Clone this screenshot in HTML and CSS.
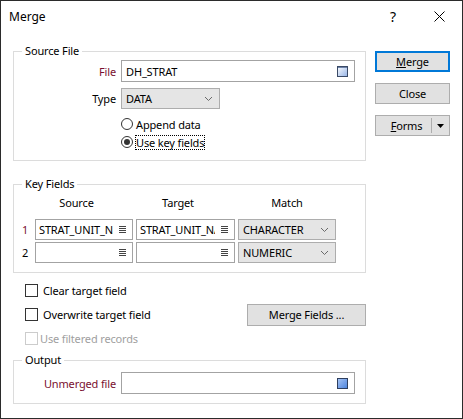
FILE: index.html
```html
<!DOCTYPE html>
<html lang="en">

<head>
    <meta charset="UTF-8">
    <title>Merge</title>
    <link rel="stylesheet" href="styles.css">
</head>

<body>
    <div class="window">
        <div class="titlebar">
            <span class="title">Merge</span>
            <div class="caption-buttons">
                <span class="cap-btn help">?</span>
                <span class="cap-btn">
                    <svg width="11" height="11" viewBox="0 0 11 11"><path d="M0.5 0.5 L10.5 10.5 M10.5 0.5 L0.5 10.5" stroke="#000" stroke-width="1" fill="none"/></svg>
                </span>
            </div>
        </div>

        <div class="dialog-body">
            <div class="main-col">
                <fieldset class="group source-group">
                    <legend>Source File</legend>
                    <div class="field-row">
                        <label class="field-label required">File</label>
                        <div class="textbox wide">
                            <span class="value">DH_STRAT</span>
                            <svg class="browse-icon" width="11" height="11" viewBox="0 0 11 11">
                                <defs>
                                    <linearGradient id="fileGrad" x1="0" y1="0" x2="1" y2="1">
                                        <stop offset="0" stop-color="#ffffff"/>
                                        <stop offset="1" stop-color="#93b2e6"/>
                                    </linearGradient>
                                </defs>
                                <rect x="0.5" y="0.5" width="10" height="10" fill="url(#fileGrad)" stroke="#3a4a66"/>
                                <line x1="1" y1="1.5" x2="10" y2="1.5" stroke="#6d82a8"/>
                            </svg>
                        </div>
                    </div>
                    <div class="field-row type-row">
                        <label class="field-label">Type</label>
                        <div class="combo type-combo">
                            <span class="value">DATA</span>
                            <svg class="chevron" width="7" height="4" viewBox="0 0 7 4"><path d="M0 0 L3.5 3.5 L7 0" stroke="#6a6a6a" fill="none"/></svg>
                        </div>
                    </div>
                    <div class="radio-list">
                        <div class="radio-row">
                            <span class="radio"></span>
                            <span class="radio-text">Append data</span>
                        </div>
                        <div class="radio-row">
                            <span class="radio checked"></span>
                            <span class="radio-text focused">Use key fields</span>
                        </div>
                    </div>
                </fieldset>

                <fieldset class="group key-group">
                    <legend>Key Fields</legend>
                    <div class="key-head">
                        <span class="num"></span>
                        <span class="col-src head-field">Source</span>
                        <span class="col-tgt head-field">Target</span>
                        <span class="col-match">Match</span>
                    </div>
                    <div class="key-row">
                        <span class="num required">1</span>
                        <div class="textbox col-src">
                            <span class="value clip">STRAT_UNIT_NAME</span>
                            <span class="list-btn"><svg width="7" height="7" viewBox="0 0 7 7"><path d="M0 0.5 H7 M0 2.5 H7 M0 4.5 H7 M0 6.5 H7" stroke="#444"/></svg></span>
                        </div>
                        <div class="textbox col-tgt">
                            <span class="value clip">STRAT_UNIT_NAME</span>
                            <span class="list-btn"><svg width="7" height="7" viewBox="0 0 7 7"><path d="M0 0.5 H7 M0 2.5 H7 M0 4.5 H7 M0 6.5 H7" stroke="#444"/></svg></span>
                        </div>
                        <div class="combo col-match">
                            <span class="value">CHARACTER</span>
                            <svg class="chevron" width="7" height="4" viewBox="0 0 7 4"><path d="M0 0 L3.5 3.5 L7 0" stroke="#6a6a6a" fill="none"/></svg>
                        </div>
                    </div>
                    <div class="key-row">
                        <span class="num">2</span>
                        <div class="textbox col-src">
                            <span class="value clip"></span>
                            <span class="list-btn"><svg width="7" height="7" viewBox="0 0 7 7"><path d="M0 0.5 H7 M0 2.5 H7 M0 4.5 H7 M0 6.5 H7" stroke="#444"/></svg></span>
                        </div>
                        <div class="textbox col-tgt">
                            <span class="value clip"></span>
                            <span class="list-btn"><svg width="7" height="7" viewBox="0 0 7 7"><path d="M0 0.5 H7 M0 2.5 H7 M0 4.5 H7 M0 6.5 H7" stroke="#444"/></svg></span>
                        </div>
                        <div class="combo col-match">
                            <span class="value">NUMERIC</span>
                            <svg class="chevron" width="7" height="4" viewBox="0 0 7 4"><path d="M0 0 L3.5 3.5 L7 0" stroke="#6a6a6a" fill="none"/></svg>
                        </div>
                    </div>
                </fieldset>

                <div class="options">
                    <div class="check-row">
                        <span class="checkbox"></span>
                        <span class="check-text">Clear target field</span>
                    </div>
                    <div class="check-row">
                        <span class="checkbox"></span>
                        <span class="check-text">Overwrite target field</span>
                        <button class="btn merge-fields-btn">Merge Fields ...</button>
                    </div>
                    <div class="check-row disabled">
                        <span class="checkbox"></span>
                        <span class="check-text">Use filtered records</span>
                    </div>
                </div>

                <fieldset class="group output-group">
                    <legend>Output</legend>
                    <div class="field-row">
                        <label class="field-label required">Unmerged file</label>
                        <div class="textbox wide">
                            <span class="value"></span>
                            <svg class="browse-icon" width="11" height="11" viewBox="0 0 11 11">
                                <defs>
                                    <linearGradient id="outGrad" x1="0" y1="0" x2="1" y2="1">
                                        <stop offset="0" stop-color="#a9c6f5"/>
                                        <stop offset="1" stop-color="#4a82dc"/>
                                    </linearGradient>
                                </defs>
                                <rect x="0.5" y="0.5" width="10" height="10" fill="url(#outGrad)" stroke="#2e3f5e"/>
                            </svg>
                        </div>
                    </div>
                </fieldset>
            </div>

            <div class="side-col">
                <button class="btn default"><u>M</u>erge</button>
                <button class="btn">Close</button>
                <div class="btn split-btn">
                    <span class="split-main"><u>F</u>orms</span>
                    <span class="split-arrow"><svg width="7" height="4" viewBox="0 0 7 4"><path d="M0 0 H7 L3.5 4 Z" fill="#000"/></svg></span>
                </div>
            </div>
        </div>
    </div>
</body>

</html>
```

FILE: styles.css
```css
* {
    margin: 0;
    padding: 0;
    box-sizing: border-box;
}

body {
    font-family: "Noto Sans", "DejaVu Sans", sans-serif;
    font-size: 11px;
    letter-spacing: -0.15px;
    color: #000;
    background: #fff;
}

.window {
    width: 463px;
    height: 419px;
    border: 1px solid #2b2b2b;
    background: #fff;
    display: flex;
    flex-direction: column;
}

/* title bar */
.titlebar {
    height: 31px;
    display: flex;
    align-items: center;
    padding-left: 8px;
}

.title {
    flex: 1;
    font-size: 12px;
    letter-spacing: 0;
}

.caption-buttons {
    display: flex;
    height: 100%;
}

.cap-btn {
    width: 46px;
    display: flex;
    align-items: center;
    justify-content: center;
}

.cap-btn.help {
    font-size: 14px;
}

/* body */
.dialog-body {
    display: flex;
    padding-left: 12px;
}

.main-col {
    width: 353px;
    margin-top: 11px;
}

.side-col {
    margin-left: 9px;
    margin-top: 19px;
    display: flex;
    flex-direction: column;
    gap: 11px;
}

/* group boxes */
.group {
    border: 1px solid #dcdcdc;
    padding: 0 10px 9px 0;
}

.group legend {
    margin-left: 8px;
    padding: 0 3px;
    line-height: 16px;
}

.source-group {
    padding-top: 1px;
}

.key-group {
    margin-top: 15px;
    padding-top: 2px;
}

.output-group {
    margin-top: 2px;
    padding-top: 4px;
}

.field-row {
    display: flex;
    align-items: center;
}

.field-label {
    width: 102px;
    margin-right: 5px;
    text-align: right;
}

.required {
    color: #7a1030;
}

.type-row {
    margin-top: 6px;
}

/* inputs */
.textbox {
    height: 21px;
    border: 1px solid #a3a3a3;
    background: #fff;
    display: flex;
    align-items: center;
    padding-left: 4px;
}

.textbox.wide {
    width: 234px;
    height: 22px;
    padding-right: 6px;
}

.textbox .value {
    flex: 1;
    white-space: nowrap;
}

.browse-icon {
    display: block;
}

.combo {
    height: 21px;
    border: 1px solid #adadad;
    background: #e5e5e5;
    display: flex;
    align-items: center;
    padding: 0 7px 0 4px;
}

.combo .value {
    flex: 1;
}

.chevron {
    display: block;
}

.type-combo {
    width: 99px;
}

/* radios */
.radio-list {
    margin-top: 6px;
    margin-left: 107px;
}

.radio-row {
    height: 18px;
    display: flex;
    align-items: center;
}

.radio {
    width: 12px;
    height: 12px;
    border: 1px solid #333;
    border-radius: 50%;
    background: #fff;
    display: flex;
    align-items: center;
    justify-content: center;
    margin-right: 3px;
}

.radio.checked::after {
    content: "";
    width: 6px;
    height: 6px;
    border-radius: 50%;
    background: #333;
}

.radio-text.focused {
    outline: 1px dotted #000;
    line-height: 13px;
}

/* key fields */
.key-head,
.key-row {
    display: flex;
    align-items: center;
}

.key-head {
    height: 16px;
}

.key-row {
    margin-top: 2px;
    height: 21px;
}

.key-head + .key-row {
    margin-top: 9px;
}

.num {
    width: 21px;
    padding-left: 8px;
}

.col-src {
    width: 98px;
}

.col-tgt {
    width: 99px;
    margin-left: 3px;
}

.col-match {
    width: 98px;
    margin-left: 3px;
}

.key-head span {
    text-align: center;
}

.head-field {
    padding-right: 15px;
}

.key-row .textbox {
    padding-left: 3px;
}

.value.clip {
    overflow: hidden;
}

.list-btn {
    width: 19px;
    display: flex;
    justify-content: center;
}

/* check boxes */
.options {
    margin-top: 6px;
    display: flex;
    flex-direction: column;
    gap: 1px;
}

.check-row {
    height: 23px;
    display: flex;
    align-items: center;
    padding-left: 12px;
}

.checkbox {
    width: 13px;
    height: 13px;
    border: 1px solid #333;
    background: #fff;
    margin-right: 5px;
}

.check-row.disabled {
    color: #a0a0a0;
}

.check-row.disabled .checkbox {
    border-color: #cccccc;
    margin-right: 2px;
}

/* buttons */
.btn {
    font-family: inherit;
    font-size: 11px;
    letter-spacing: -0.15px;
    color: #000;
    width: 75px;
    height: 21px;
    border: 1px solid #adadad;
    background: #e1e1e1;
}

.btn.default {
    border: 2px solid #0078d7;
}

.merge-fields-btn {
    margin-left: auto;
    width: 119px;
    height: 22px;
}

.split-btn {
    display: flex;
    align-items: center;
}

.split-main {
    flex: 1;
    text-align: center;
    padding-left: 6px;
    border-right: 1px solid #adadad;
    line-height: 15px;
}

.split-arrow {
    width: 17px;
    display: flex;
    justify-content: center;
}

.split-arrow svg {
    display: block;
}
```
